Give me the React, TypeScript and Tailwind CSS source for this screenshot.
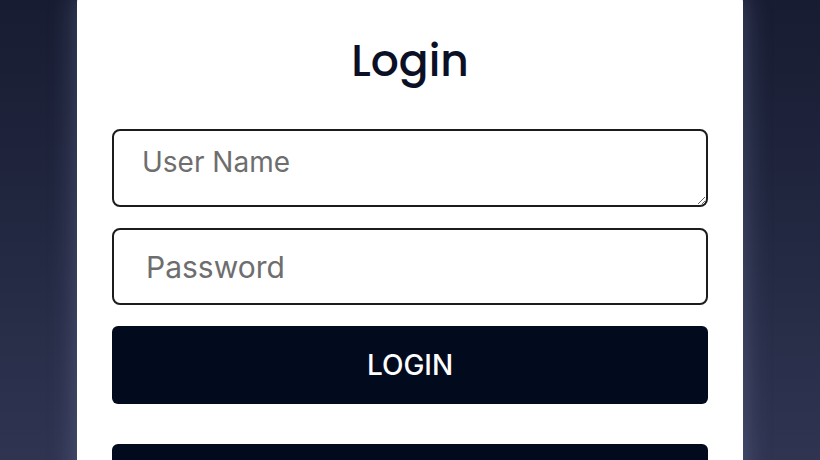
import React from 'react';

export default function App() {
  return (
    <div className="h-[460px] w-full overflow-hidden bg-gradient-to-b from-[#171c32] to-[#2f3451] font-['Inter',sans-serif]">
      <div className="mx-auto -mt-[8px] w-[666px] rounded-[10px] bg-white px-[35px] pt-[39px] pb-10 shadow-[0_0_28px_rgba(150,160,200,0.35)]">
        <h1 className="text-center text-[44px] font-medium leading-[60px] text-[#0b1026] font-['Poppins','Inter',sans-serif]">
          Login
        </h1>
        <form className="mt-[38px] flex flex-col">
          <textarea
            placeholder="User Name"
            className="h-[78px] w-full rounded-[8px] border-2 border-[#1c1c1c] px-[28px] py-[11px] text-[28px] leading-[40px] text-[#111] placeholder:text-[#6e6e6e] outline-none"
          />
          <input
            type="password"
            placeholder="Password"
            className="mt-[21px] h-[77px] w-full rounded-[8px] border-2 border-[#1c1c1c] px-[32px] text-[30px] text-[#111] placeholder:text-[#6e6e6e] outline-none"
          />
          <button
            type="button"
            className="mt-[21px] h-[78px] w-full rounded-[6px] bg-[#020a1e] text-[28px] font-medium text-white"
          >
            LOGIN
          </button>
          <button
            type="button"
            className="mt-[40px] h-[78px] w-full rounded-[6px] bg-[#020a1e] text-[28px] font-medium text-white"
          >
            SIGN UP
          </button>
        </form>
      </div>
    </div>
  );
}
